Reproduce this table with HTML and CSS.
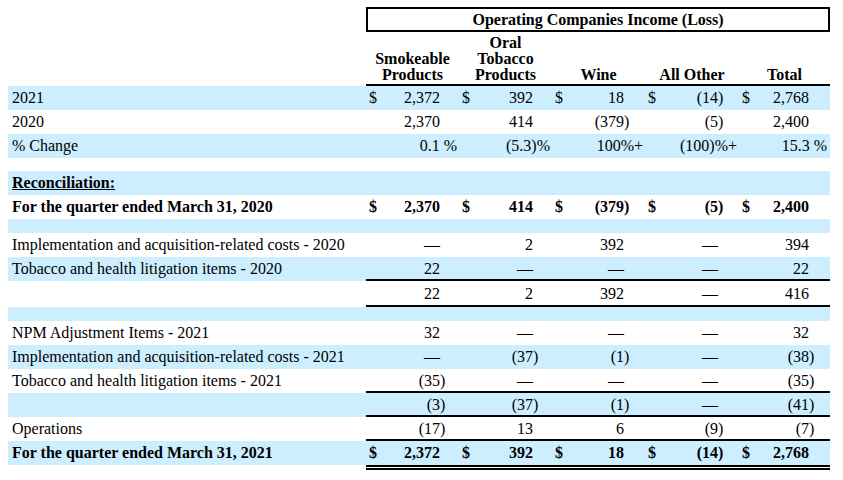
FILE: index.html
```html
<!DOCTYPE html>
<html lang="en">
<head>
<meta charset="utf-8">
<title>Operating Companies Income (Loss)</title>
<link rel="stylesheet" href="styles.css">
</head>
<body>
<table class="fin">
  <colgroup>
    <col class="c-label">
    <col class="c-dol"><col class="c-num1"><col class="c-suf1">
    <col class="c-dol"><col class="c-num1"><col class="c-suf1">
    <col class="c-dol"><col class="c-num3"><col class="c-suf2">
    <col class="c-dol"><col class="c-num4"><col class="c-suf2">
    <col class="c-dol"><col class="c-num5"><col class="c-suf2">
  </colgroup>
  <thead>
    <tr class="r-title">
      <td></td>
      <td colspan="15" class="title-cell"><div class="title-box">Operating Companies Income (Loss)</div></td>
    </tr>
    <tr class="r-heads">
      <td></td>
      <th colspan="3">Smokeable<br>Products</th>
      <th colspan="3">Oral<br>Tobacco<br>Products</th>
      <th colspan="3">Wine</th>
      <th colspan="3">All Other</th>
      <th colspan="3">Total</th>
    </tr>
  </thead>
  <tbody>
    <tr class="band">
      <td class="lbl">2021</td>
      <td class="dol">$</td><td class="num">2,372</td><td class="suf"></td>
      <td class="dol">$</td><td class="num">392</td><td class="suf"></td>
      <td class="dol">$</td><td class="num">18</td><td class="suf"></td>
      <td class="dol">$</td><td class="num">(14</td><td class="suf">)</td>
      <td class="dol">$</td><td class="num">2,768</td><td class="suf"></td>
    </tr>
    <tr>
      <td class="lbl">2020</td>
      <td class="dol"></td><td class="num">2,370</td><td class="suf"></td>
      <td class="dol"></td><td class="num">414</td><td class="suf"></td>
      <td class="dol"></td><td class="num">(379</td><td class="suf">)</td>
      <td class="dol"></td><td class="num">(5</td><td class="suf">)</td>
      <td class="dol"></td><td class="num">2,400</td><td class="suf"></td>
    </tr>
    <tr class="band">
      <td class="lbl">% Change</td>
      <td class="dol"></td><td class="pct" colspan="2">0.1 %</td>
      <td class="dol"></td><td class="pct" colspan="2">(5.3)%</td>
      <td class="dol"></td><td class="pct" colspan="2">100%+</td>
      <td class="dol"></td><td class="pct" colspan="2">(100)%+</td>
      <td class="dol"></td><td class="pct pct-end" colspan="2">15.3 %</td>
    </tr>
    <tr class="sp sp-13"><td colspan="16"></td></tr>
    <tr class="band">
      <td class="lbl"><span class="head-u">Reconciliation:</span></td>
      <td colspan="15"></td>
    </tr>
    <tr class="bold">
      <td class="lbl">For the quarter ended March 31, 2020</td>
      <td class="dol">$</td><td class="num">2,370</td><td class="suf"></td>
      <td class="dol">$</td><td class="num">414</td><td class="suf"></td>
      <td class="dol">$</td><td class="num">(379</td><td class="suf">)</td>
      <td class="dol">$</td><td class="num">(5</td><td class="suf">)</td>
      <td class="dol">$</td><td class="num">2,400</td><td class="suf"></td>
    </tr>
    <tr class="band sp"><td colspan="16"></td></tr>
    <tr>
      <td class="lbl">Implementation and acquisition-related costs - 2020</td>
      <td class="dol"></td><td class="num">—</td><td class="suf"></td>
      <td class="dol"></td><td class="num">2</td><td class="suf"></td>
      <td class="dol"></td><td class="num">392</td><td class="suf"></td>
      <td class="dol"></td><td class="num">—</td><td class="suf"></td>
      <td class="dol"></td><td class="num">394</td><td class="suf"></td>
    </tr>
    <tr class="band ul">
      <td class="lbl">Tobacco and health litigation items - 2020</td>
      <td class="dol"></td><td class="num">22</td><td class="suf"></td>
      <td class="dol"></td><td class="num">—</td><td class="suf"></td>
      <td class="dol"></td><td class="num">—</td><td class="suf"></td>
      <td class="dol"></td><td class="num">—</td><td class="suf"></td>
      <td class="dol"></td><td class="num">22</td><td class="suf"></td>
    </tr>
    <tr class="ul tall">
      <td class="lbl"></td>
      <td class="dol"></td><td class="num">22</td><td class="suf"></td>
      <td class="dol"></td><td class="num">2</td><td class="suf"></td>
      <td class="dol"></td><td class="num">392</td><td class="suf"></td>
      <td class="dol"></td><td class="num">—</td><td class="suf"></td>
      <td class="dol"></td><td class="num">416</td><td class="suf"></td>
    </tr>
    <tr class="band sp"><td colspan="16"></td></tr>
    <tr>
      <td class="lbl">NPM Adjustment Items - 2021</td>
      <td class="dol"></td><td class="num">32</td><td class="suf"></td>
      <td class="dol"></td><td class="num">—</td><td class="suf"></td>
      <td class="dol"></td><td class="num">—</td><td class="suf"></td>
      <td class="dol"></td><td class="num">—</td><td class="suf"></td>
      <td class="dol"></td><td class="num">32</td><td class="suf"></td>
    </tr>
    <tr class="band">
      <td class="lbl">Implementation and acquisition-related costs - 2021</td>
      <td class="dol"></td><td class="num">—</td><td class="suf"></td>
      <td class="dol"></td><td class="num">(37</td><td class="suf">)</td>
      <td class="dol"></td><td class="num">(1</td><td class="suf">)</td>
      <td class="dol"></td><td class="num">—</td><td class="suf"></td>
      <td class="dol"></td><td class="num">(38</td><td class="suf">)</td>
    </tr>
    <tr class="ul">
      <td class="lbl">Tobacco and health litigation items - 2021</td>
      <td class="dol"></td><td class="num">(35</td><td class="suf">)</td>
      <td class="dol"></td><td class="num">—</td><td class="suf"></td>
      <td class="dol"></td><td class="num">—</td><td class="suf"></td>
      <td class="dol"></td><td class="num">—</td><td class="suf"></td>
      <td class="dol"></td><td class="num">(35</td><td class="suf">)</td>
    </tr>
    <tr class="band ul">
      <td class="lbl"></td>
      <td class="dol"></td><td class="num">(3</td><td class="suf">)</td>
      <td class="dol"></td><td class="num">(37</td><td class="suf">)</td>
      <td class="dol"></td><td class="num">(1</td><td class="suf">)</td>
      <td class="dol"></td><td class="num">—</td><td class="suf"></td>
      <td class="dol"></td><td class="num">(41</td><td class="suf">)</td>
    </tr>
    <tr class="ul">
      <td class="lbl">Operations</td>
      <td class="dol"></td><td class="num">(17</td><td class="suf">)</td>
      <td class="dol"></td><td class="num">13</td><td class="suf"></td>
      <td class="dol"></td><td class="num">6</td><td class="suf"></td>
      <td class="dol"></td><td class="num">(9</td><td class="suf">)</td>
      <td class="dol"></td><td class="num">(7</td><td class="suf">)</td>
    </tr>
    <tr class="band bold dul">
      <td class="lbl">For the quarter ended March 31, 2021</td>
      <td class="dol">$</td><td class="num">2,372</td><td class="suf"></td>
      <td class="dol">$</td><td class="num">392</td><td class="suf"></td>
      <td class="dol">$</td><td class="num">18</td><td class="suf"></td>
      <td class="dol">$</td><td class="num">(14</td><td class="suf">)</td>
      <td class="dol">$</td><td class="num">2,768</td><td class="suf"></td>
    </tr>
  </tbody>
</table>
</body>
</html>
```

FILE: styles.css
```css
html, body {
  background: #ffffff;
}

body {
  margin: 7px 13px 0 8px;
  font-family: "Liberation Serif", "Times New Roman", serif;
  font-size: 16px;
  color: #000000;
}

.fin {
  width: 822px;
  table-layout: fixed;
  border-collapse: separate;
  border-spacing: 0;
}

.c-label { width: 358px; }
.c-dol { width: 18px; }
.c-num1 { width: 56px; }
.c-num3 { width: 54px; }
.c-num4 { width: 55px; }
.c-num5 { width: 52px; }
.c-suf1 { width: 19px; }
.c-suf2 { width: 21px; }

.fin td,
.fin th {
  padding: 3px 0;
  line-height: 18px;
  white-space: nowrap;
  background-clip: padding-box;
}

/* title box */
.r-title td {
  padding: 0;
}

.title-box {
  border: 2px solid #000000;
  height: 21px;
  line-height: 22px;
  text-align: center;
  font-weight: bold;
}

/* column heads */
.r-heads td {
  padding: 0;
}

.r-heads th {
  padding: 3px 0 1px;
  line-height: 16px;
  font-weight: bold;
  text-align: center;
  vertical-align: bottom;
  border-bottom: 2px solid #000000;
}

/* body cells */
.band td {
  background-color: #cceeff;
}

.lbl {
  padding-left: 4px !important;
  text-align: left;
}

.dol {
  padding-left: 3px !important;
  text-align: left;
}

.num {
  text-align: right;
}

.suf {
  text-align: left;
}

.pct {
  text-align: right;
  padding-right: 2px !important;
}

.pct-end {
  padding-right: 3px !important;
}

.bold td {
  font-weight: bold;
}

.head-u {
  font-weight: bold;
  text-decoration: underline;
}

/* spacer rows */
.sp td {
  padding: 0;
  height: 14px;
  line-height: 0;
}

.sp-13 td {
  height: 13px;
}

/* underlines */
.ul td:not(.lbl) {
  padding-bottom: 1px;
  border-bottom: 2px solid #000000;
}

.ul.tall td:not(.lbl) {
  padding-top: 4px;
  padding-bottom: 2px;
}

.dul td:not(.lbl) {
  border-bottom: 5px double #000000;
}

.dul td.lbl {
  border-bottom: 5px solid transparent;
}
```
